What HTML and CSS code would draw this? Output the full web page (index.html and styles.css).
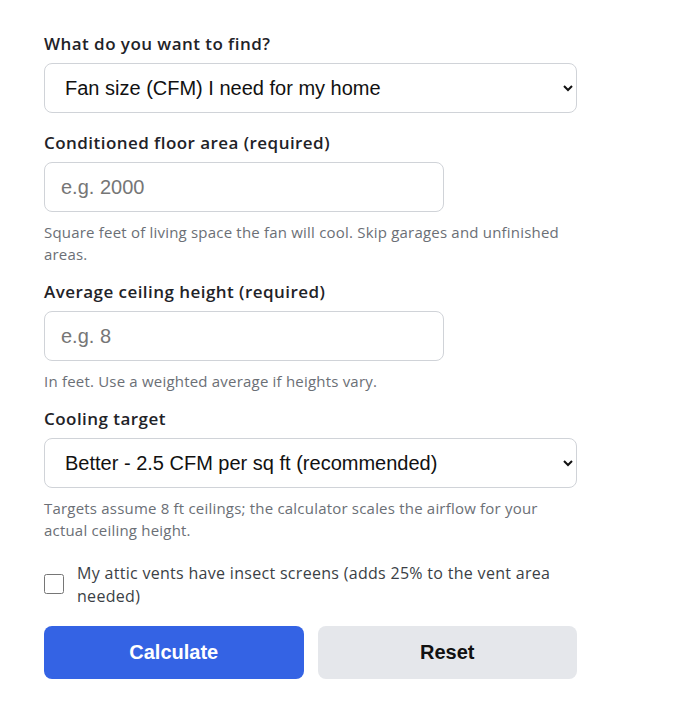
FILE: index.html
```html
<!DOCTYPE html>
<html lang="en">
<head>
    <meta charset="UTF-8">
    <meta name="viewport" content="width=device-width, initial-scale=1.0">
    <title>Whole House Fan Calculator</title>
    <link rel="stylesheet" href="styles.css">
</head>
<body>
    <form class="calc-form" id="calcForm">
        <div class="field">
            <label for="mode">What do you want to find?</label>
            <select id="mode" class="control">
                <option>Fan size (CFM) I need for my home</option>
                <option>Attic vent area for my fan</option>
            </select>
        </div>

        <div class="field">
            <label for="area">Conditioned floor area (required)</label>
            <input type="text" id="area" class="control control-short" placeholder="e.g. 2000">
            <p class="help">Square feet of living space the fan will cool. Skip garages and unfinished areas.</p>
        </div>

        <div class="field">
            <label for="height">Average ceiling height (required)</label>
            <input type="text" id="height" class="control control-short" placeholder="e.g. 8">
            <p class="help">In feet. Use a weighted average if heights vary.</p>
        </div>

        <div class="field">
            <label for="target">Cooling target</label>
            <select id="target" class="control">
                <option>Good - 2 CFM per sq ft</option>
                <option selected>Better - 2.5 CFM per sq ft (recommended)</option>
                <option>Best - 3 CFM per sq ft</option>
            </select>
            <p class="help">Targets assume 8 ft ceilings; the calculator scales the airflow for your actual ceiling height.</p>
        </div>

        <label class="check-row">
            <input type="checkbox" id="screens">
            <span>My attic vents have insect screens (adds 25% to the vent area needed)</span>
        </label>

        <div class="buttons">
            <button type="button" class="btn btn-primary">Calculate</button>
            <button type="reset" class="btn btn-secondary">Reset</button>
        </div>
    </form>
</body>
</html>
```

FILE: styles.css
```css
body {
    margin: 0;
    background-color: #fff;
    font-family: "Open Sans", "Noto Sans", sans-serif;
    color: #1f2328;
}

.calc-form {
    width: 533px;
    padding: 32px 44px;
}

.field {
    margin-bottom: 18px;
}

.field label {
    display: block;
    font-size: 17px;
    font-weight: 600;
    letter-spacing: 0.45px;
    line-height: 24px;
    margin-bottom: 7px;
    color: #1f2328;
}

.control {
    box-sizing: border-box;
    display: block;
    width: 100%;
    height: 50px;
    padding: 0 16px;
    border: 1px solid #d0d3d8;
    border-radius: 8px;
    background-color: #fff;
    font-family: "Liberation Sans", Arial, sans-serif;
    font-size: 20px;
    color: #111;
}

.control-short {
    width: 400px;
}

.control::placeholder {
    color: #767676;
}

.help {
    margin: 9px 0 -3px;
    font-size: 15px;
    letter-spacing: 0.2px;
    line-height: 22px;
    color: #6b6f76;
}

.check-row {
    display: flex;
    align-items: flex-start;
    gap: 13px;
    font-size: 16px;
    letter-spacing: 0.3px;
    line-height: 23px;
    color: #3b3f46;
    margin-top: 24px;
}

.check-row input {
    width: 20px;
    height: 20px;
    margin: 12px 0 0;
    flex-shrink: 0;
}

.buttons {
    display: flex;
    gap: 14px;
    margin-top: 18px;
}

.btn {
    flex: 1;
    height: 53px;
    border: none;
    border-radius: 8px;
    font-family: "Liberation Sans", Arial, sans-serif;
    font-size: 20px;
    font-weight: bold;
    cursor: pointer;
}

.btn-primary {
    background-color: #3463e4;
    color: #fff;
}

.btn-secondary {
    background-color: #e5e7eb;
    color: #111;
}
```
